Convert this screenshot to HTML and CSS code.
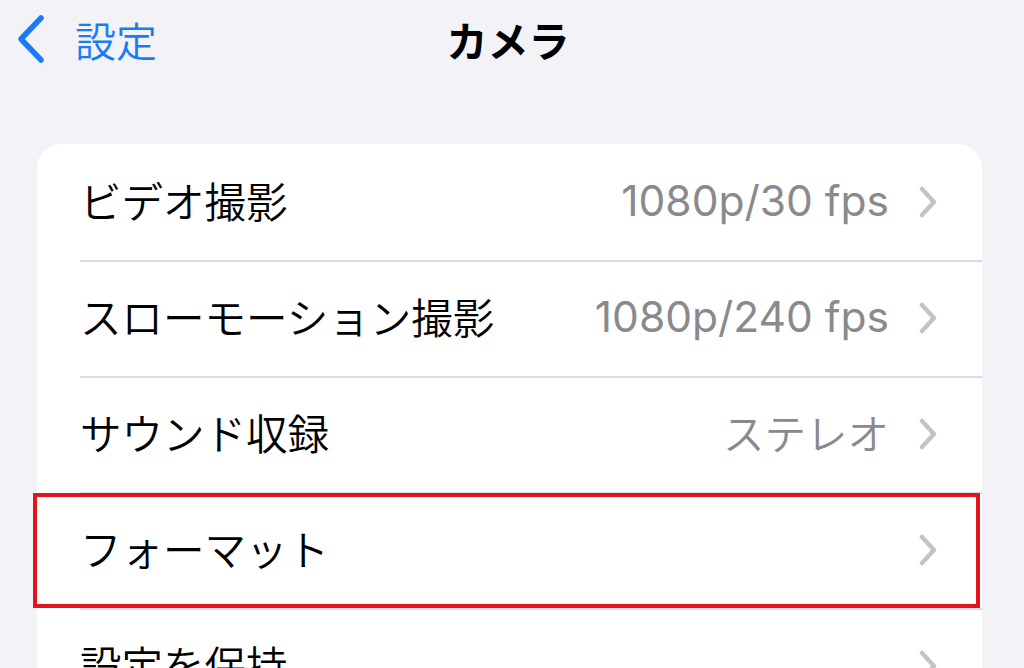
FILE: index.html
```html
<!DOCTYPE html>
<html lang="ja">
<head>
<meta charset="utf-8">
<link rel="stylesheet" href="styles.css">
</head>
<body>
<div class="screen">
  <header class="nav">
    <div class="back">
      <svg class="back-icon" width="30" height="50" viewBox="0 0 30 50"><path d="M25 4 L5 25 L25 46" fill="none" stroke="#1a7cf5" stroke-width="5.5" stroke-linecap="round" stroke-linejoin="round"/></svg>
      <span class="back-label">設定</span>
    </div>
    <h1 class="title">カメラ</h1>
  </header>
  <div class="card">
    <div class="row">
      <span class="label">ビデオ撮影</span>
      <span class="value">1080p/30 fps</span>
      <svg class="chev" width="20" height="32" viewBox="0 0 20 32"><path d="M4 3 L16 16 L4 29" fill="none" stroke="#c4c4c8" stroke-width="4.5" stroke-linecap="round" stroke-linejoin="round"/></svg>
    </div>
    <div class="row">
      <span class="label">スローモーション撮影</span>
      <span class="value">1080p/240 fps</span>
      <svg class="chev" width="20" height="32" viewBox="0 0 20 32"><path d="M4 3 L16 16 L4 29" fill="none" stroke="#c4c4c8" stroke-width="4.5" stroke-linecap="round" stroke-linejoin="round"/></svg>
    </div>
    <div class="row">
      <span class="label">サウンド収録</span>
      <span class="value value-jp">ステレオ</span>
      <svg class="chev" width="20" height="32" viewBox="0 0 20 32"><path d="M4 3 L16 16 L4 29" fill="none" stroke="#c4c4c8" stroke-width="4.5" stroke-linecap="round" stroke-linejoin="round"/></svg>
    </div>
    <div class="row highlighted">
      <span class="label">フォーマット</span>
      <span class="value"></span>
      <svg class="chev" width="20" height="32" viewBox="0 0 20 32"><path d="M4 3 L16 16 L4 29" fill="none" stroke="#c4c4c8" stroke-width="4.5" stroke-linecap="round" stroke-linejoin="round"/></svg>
    </div>
    <div class="row">
      <span class="label">設定を保持</span>
      <span class="value"></span>
      <svg class="chev" width="20" height="32" viewBox="0 0 20 32"><path d="M4 3 L16 16 L4 29" fill="none" stroke="#c4c4c8" stroke-width="4.5" stroke-linecap="round" stroke-linejoin="round"/></svg>
    </div>
  </div>
</div>
</body>
</html>
```

FILE: styles.css
```css
html, body {
  margin: 0;
  padding: 0;
  width: 1024px;
  height: 668px;
  overflow: hidden;
  background: #f2f2f7;
  font-family: "Noto Sans CJK JP", "Noto Sans", sans-serif;
}
.screen {
  width: 1024px;
  height: 668px;
  overflow: hidden;
}
.nav {
  position: relative;
  height: 80px;
  display: flex;
  align-items: center;
  justify-content: center;
}
.back {
  position: absolute;
  left: 16px;
  top: 14px;
  display: flex;
  align-items: center;
  gap: 29px;
  height: 50px;
}
.back-icon {
  display: block;
}
.back-label {
  color: #1a7cf5;
  font-size: 41px;
  font-weight: 350;
  line-height: 50px;
}
.title {
  margin: 0;
  font-size: 41px;
  font-weight: 700;
  color: #000;
  line-height: 50px;
  position: relative;
  top: -1px;
  left: -4px;
}
.card {
  margin: 64px 42px 0 37px;
  background: #fff;
  border-radius: 24px 24px 0 0;
}
.row {
  position: relative;
  height: 116px;
  display: flex;
  align-items: center;
  padding: 0 44px 0 43px;
}
.row + .row::before {
  content: "";
  position: absolute;
  left: 43px;
  right: 0;
  top: 0;
  height: 1.5px;
  background: #dcdce0;
}
.label {
  font-size: 41.5px;
  font-weight: 350;
  color: #000;
  flex: 1;
  white-space: nowrap;
  position: relative;
  top: -2px;
}
.value {
  font-family: "Inter", "Noto Sans CJK JP", sans-serif;
  font-size: 42.5px;
  font-weight: 400;
  color: #8a8a8e;
  margin-right: 29px;
  white-space: nowrap;
  position: relative;
  top: -2px;
}
.value-jp {
  font-family: "Noto Sans CJK JP", sans-serif;
  font-size: 41.5px;
  font-weight: 350;
}
.chev {
  display: block;
}
.highlighted::after {
  content: "";
  position: absolute;
  left: -4px;
  right: 2px;
  top: 1px;
  bottom: 0;
  border: 4px solid #e3141b;
  z-index: 2;
}
```
